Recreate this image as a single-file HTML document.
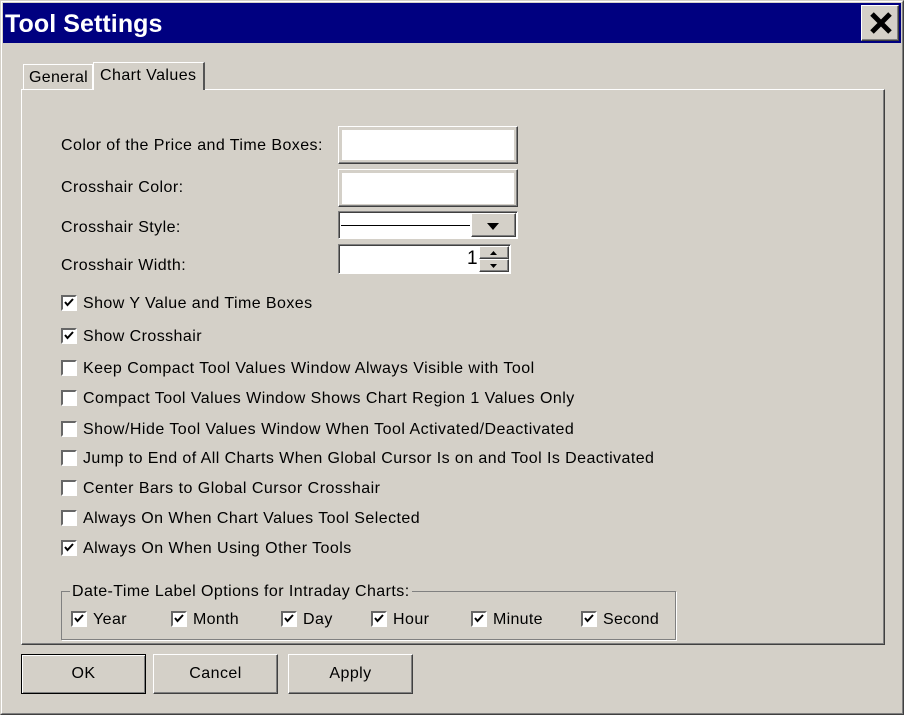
<!DOCTYPE html>
<html>
<head>
<meta charset="utf-8">
<style>
html,body{margin:0;padding:0;width:904px;height:715px;overflow:hidden;background:#d4d0c8}
*{box-sizing:border-box}
body{position:relative;font-family:"Liberation Sans",sans-serif;font-size:16px;color:#000}
.a{position:absolute}
.t{position:absolute;white-space:nowrap;line-height:20px;height:20px;letter-spacing:.43px;margin-top:2px}
.raised{position:absolute;background:#d4d0c8;border:1px solid;border-color:#fff #404040 #404040 #fff;box-shadow:inset -1px -1px 0 #808080}
.cb{position:absolute;width:16px;height:16px;background:#fff;border:2px solid;border-color:#666 #fff #fff #666}
.cb svg{position:absolute;left:0;top:0}
.btn{text-align:center;line-height:38px;font-size:16px;letter-spacing:.43px}
</style>
</head>
<body>
<!-- window frame -->
<div class="a" style="left:0;top:0;width:904px;height:715px;border:1px solid;border-color:#d4d0c8 #404040 #404040 #d4d0c8"></div>
<div class="a" style="left:1px;top:1px;width:902px;height:713px;border:1px solid;border-color:#fff #808080 #808080 #fff"></div>
<!-- title bar -->
<div class="a" style="left:3px;top:3px;width:898px;height:40px;background:#000080"></div>
<div class="a" style="left:5px;top:10px;color:#fff;font-weight:bold;font-size:25px;line-height:28px;letter-spacing:.08px;white-space:nowrap">Tool Settings</div>
<div class="raised" style="left:861px;top:5px;width:38px;height:36px">
<svg class="a" style="left:7px;top:5px" width="24" height="24" viewBox="0 0 24 24"><path d="M3 3 L21 21 M21 3 L3 21" stroke="#000" stroke-width="5" fill="none"/></svg>
</div>
<!-- tab page -->
<div class="a" style="left:21px;top:89px;width:864px;height:556px;border:1px solid;border-color:#fff #404040 #404040 #fff;box-shadow:inset -1px -1px 0 #808080"></div>
<!-- General tab -->
<div class="a" style="left:23px;top:64px;width:70px;height:25px;background:#d4d0c8;border-top:1px solid #fff;border-left:1px solid #fff;border-right:1px solid #fff"></div>
<div class="t" style="left:29px;top:66px;letter-spacing:.3px">General</div>
<!-- Chart Values tab -->
<div class="a" style="left:93px;top:62px;width:112px;height:28px;background:#d4d0c8;border-top:1px solid #fff;border-left:1px solid #fff;border-right:2px solid #555"></div>
<div class="t" style="left:100px;top:64px">Chart Values</div>
<!-- labels -->
<div class="t" style="left:61px;top:134px">Color of the Price and Time Boxes:</div>
<div class="t" style="left:61px;top:176px">Crosshair Color:</div>
<div class="t" style="left:61px;top:216px">Crosshair Style:</div>
<div class="t" style="left:61px;top:254px">Crosshair Width:</div>
<!-- color boxes -->
<div class="raised" style="left:338px;top:126px;width:180px;height:38px"><div class="a" style="left:3px;top:3px;width:172px;height:30px;background:#fff"></div></div>
<div class="raised" style="left:338px;top:169px;width:180px;height:38px"><div class="a" style="left:3px;top:3px;width:172px;height:31px;background:#fff"></div></div>
<!-- combo -->
<div class="a" style="left:338px;top:211px;width:180px;height:28px;background:#fff;border:1px solid;border-color:#808080 #fff #fff #808080"></div>
<div class="a" style="left:339px;top:212px;width:178px;height:26px;background:#fff;border-top:1px solid #404040;border-left:1px solid #404040"></div>
<div class="a" style="left:341px;top:225px;width:129px;height:1px;background:#000"></div>
<div class="raised" style="left:471px;top:213px;width:45px;height:24px">
<svg class="a" style="left:15px;top:9px" width="12" height="7"><path d="M0 0H12L6 7Z" fill="#000"/></svg>
</div>
<!-- spinner -->
<div class="a" style="left:338px;top:244px;width:173px;height:30px;background:#fff;border:1px solid;border-color:#808080 #fff #fff #808080"></div>
<div class="a" style="left:339px;top:245px;width:171px;height:28px;background:#fff;border-top:1px solid #404040;border-left:1px solid #404040"></div>
<div class="a" style="left:467px;top:247px;font-size:19px;line-height:24px">1</div>
<div class="raised" style="left:479px;top:246px;width:30px;height:13px">
<svg class="a" style="left:10px;top:4px" width="7" height="4"><path d="M3.500 0L7 4H0Z" fill="#000"/></svg>
</div>
<div class="raised" style="left:479px;top:259px;width:30px;height:13px">
<svg class="a" style="left:10px;top:4px" width="7" height="4"><path d="M0 0H7L3.500 4Z" fill="#000"/></svg>
</div>
<!-- checks -->
<div class="cb" style="left:61px;top:295px"><svg width="12" height="12"><path d="M2 5L4.500 8L10 2" stroke="#000" stroke-width="2" fill="none"/></svg></div>
<div class="t" style="left:83px;top:292px">Show Y Value and Time Boxes</div>
<div class="cb" style="left:61px;top:328px"><svg width="12" height="12"><path d="M2 5L4.500 8L10 2" stroke="#000" stroke-width="2" fill="none"/></svg></div>
<div class="t" style="left:83px;top:325px">Show Crosshair</div>
<div class="cb" style="left:61px;top:360px"></div>
<div class="t" style="left:83px;top:357px;letter-spacing:.48px">Keep Compact Tool Values Window Always Visible with Tool</div>
<div class="cb" style="left:61px;top:390px"></div>
<div class="t" style="left:83px;top:387px;letter-spacing:.45px">Compact Tool Values Window Shows Chart Region 1 Values Only</div>
<div class="cb" style="left:61px;top:421px"></div>
<div class="t" style="left:83px;top:418px;letter-spacing:.48px">Show/Hide Tool Values Window When Tool Activated/Deactivated</div>
<div class="cb" style="left:61px;top:450px"></div>
<div class="t" style="left:83px;top:447px">Jump to End of All Charts When Global Cursor Is on and Tool Is Deactivated</div>
<div class="cb" style="left:61px;top:480px"></div>
<div class="t" style="left:83px;top:477px;letter-spacing:.48px">Center Bars to Global Cursor Crosshair</div>
<div class="cb" style="left:61px;top:510px"></div>
<div class="t" style="left:83px;top:507px;letter-spacing:.45px">Always On When Chart Values Tool Selected</div>
<div class="cb" style="left:61px;top:540px"><svg width="12" height="12"><path d="M2 5L4.500 8L10 2" stroke="#000" stroke-width="2" fill="none"/></svg></div>
<div class="t" style="left:83px;top:537px;letter-spacing:.46px">Always On When Using Other Tools</div>
<!-- group -->
<div class="a" style="left:61px;top:591px;width:615px;height:49px;border:1px solid #808080;box-shadow:1px 1px 0 #fff"></div>
<div class="t" style="left:70px;top:580px;background:#d4d0c8;padding:0 2px">Date-Time Label Options for Intraday Charts:</div>
<div class="cb" style="left:71px;top:611px"><svg width="12" height="12"><path d="M2 5L4.500 8L10 2" stroke="#000" stroke-width="2" fill="none"/></svg></div>
<div class="t" style="left:93px;top:608px">Year</div>
<div class="cb" style="left:171px;top:611px"><svg width="12" height="12"><path d="M2 5L4.500 8L10 2" stroke="#000" stroke-width="2" fill="none"/></svg></div>
<div class="t" style="left:193px;top:608px;letter-spacing:.3px">Month</div>
<div class="cb" style="left:281px;top:611px"><svg width="12" height="12"><path d="M2 5L4.500 8L10 2" stroke="#000" stroke-width="2" fill="none"/></svg></div>
<div class="t" style="left:303px;top:608px">Day</div>
<div class="cb" style="left:371px;top:611px"><svg width="12" height="12"><path d="M2 5L4.500 8L10 2" stroke="#000" stroke-width="2" fill="none"/></svg></div>
<div class="t" style="left:393px;top:608px">Hour</div>
<div class="cb" style="left:471px;top:611px"><svg width="12" height="12"><path d="M2 5L4.500 8L10 2" stroke="#000" stroke-width="2" fill="none"/></svg></div>
<div class="t" style="left:493px;top:608px;letter-spacing:.3px">Minute</div>
<div class="cb" style="left:581px;top:611px"><svg width="12" height="12"><path d="M2 5L4.500 8L10 2" stroke="#000" stroke-width="2" fill="none"/></svg></div>
<div class="t" style="left:603px;top:608px;letter-spacing:.3px">Second</div>
<!-- buttons -->
<div class="raised btn" style="left:21px;top:654px;width:125px;height:40px;border-color:#000;box-shadow:inset 1px 1px 0 #fff,inset -1px -1px 0 #808080">OK</div>
<div class="raised btn" style="left:153px;top:654px;width:125px;height:40px">Cancel</div>
<div class="raised btn" style="left:288px;top:654px;width:125px;height:40px">Apply</div>
</body>
</html>
